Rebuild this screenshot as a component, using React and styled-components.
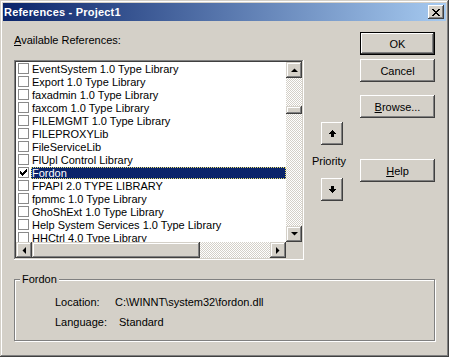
import React from 'react'
import styled, { createGlobalStyle } from 'styled-components'

const refs = [
  { name: 'EventSystem 1.0 Type Library' },
  { name: 'Export 1.0 Type Library' },
  { name: 'faxadmin 1.0 Type Library' },
  { name: 'faxcom 1.0 Type Library' },
  { name: 'FILEMGMT 1.0 Type Library' },
  { name: 'FILEPROXYLib' },
  { name: 'FileServiceLib' },
  { name: 'FlUpl Control Library' },
  { name: 'Fordon', checked: true, selected: true },
  { name: 'FPAPI 2.0 TYPE LIBRARY' },
  { name: 'fpmmc 1.0 Type Library' },
  { name: 'GhoShExt 1.0 Type Library' },
  { name: 'Help System Services 1.0 Type Library' },
  { name: 'HHCtrl 4.0 Type Library' },
]

const Global = createGlobalStyle`
  body {
    margin: 0;
    background: #d4d0c8;
    font-family: 'Liberation Sans', Arial, sans-serif;
    font-size: 11px;
  }
`

// little black triangles for scroll buttons
const Tri = ({ dir }) => {
  const pts = {
    up: '0,4 7,4 3.5,0.5',
    down: '0,0 7,0 3.5,3.5',
    left: '4,0 4,7 0.5,3.5',
    right: '0,0 0,7 3.5,3.5',
  }[dir]
  const vertical = dir === 'up' || dir === 'down'
  return (
    <svg width={vertical ? 7 : 4} height={vertical ? 4 : 7} viewBox={vertical ? '0 0 7 4' : '0 0 4 7'}>
      <polygon points={pts} fill="#000" />
    </svg>
  )
}

const Arrow = ({ down }) => (
  <svg width="7" height="7" viewBox="0 0 7 7" shapeRendering="crispEdges"
    style={down ? { transform: 'rotate(180deg)' } : undefined}>
    <rect x="3" y="0" width="1" height="1" fill="#000" />
    <rect x="2" y="1" width="3" height="1" fill="#000" />
    <rect x="1" y="2" width="5" height="1" fill="#000" />
    <rect x="0" y="3" width="7" height="1" fill="#000" />
    <rect x="2" y="4" width="3" height="3" fill="#000" />
  </svg>
)

export default function App() {
  return (
    <>
      <Global />
      <Window>
        <TitleBar>
          <Title>References - Project1</Title>
          <CloseBtn>
            <svg width="8" height="7" viewBox="0 0 8 7" shapeRendering="crispEdges">
              <path d="M0 0h2v1h-2zM6 0h2v1h-2zM1 1h2v1h-2zM5 1h2v1h-2zM2 2h4v1h-4zM3 3h2v1h-2zM2 4h4v1h-4zM1 5h2v1h-2zM5 5h2v1h-2zM0 6h2v1h-2zM6 6h2v1h-2z" fill="#000" />
            </svg>
          </CloseBtn>
        </TitleBar>
        <Body>
          <TopRow>
            <LeftCol>
              <Caption><u>A</u>vailable References:</Caption>
              <ListBox>
                <ListArea>
                  <Rows>
                    {refs.map((r) => (
                      <Row key={r.name}>
                        <Check>
                          {r.checked && (
                            <svg width="7" height="7" viewBox="0 0 7 7" shapeRendering="crispEdges">
                              <path d="M0 2h1v3h-1zM1 3h1v3h-1zM2 4h1v3h-1zM3 3h1v3h-1zM4 2h1v3h-1zM5 1h1v3h-1zM6 0h1v3h-1z" fill="#000" />
                            </svg>
                          )}
                        </Check>
                        <ItemText $selected={r.selected}>{r.name}</ItemText>
                      </Row>
                    ))}
                  </Rows>
                  <VScroll>
                    <ScrollBtn><Tri dir="up" /></ScrollBtn>
                    <Track $vertical>
                      <VThumb />
                    </Track>
                    <ScrollBtn><Tri dir="down" /></ScrollBtn>
                  </VScroll>
                </ListArea>
                <HScroll>
                  <ScrollBtn><Tri dir="left" /></ScrollBtn>
                  <HThumb />
                  <Track />
                  <ScrollBtn><Tri dir="right" /></ScrollBtn>
                  <Corner />
                </HScroll>
              </ListBox>
            </LeftCol>
            <PriorityCol>
              <ArrowBtn><Arrow /></ArrowBtn>
              <PriorityLabel>Priority</PriorityLabel>
              <ArrowBtn><Arrow down /></ArrowBtn>
            </PriorityCol>
            <ButtonCol>
              <Button $default>OK</Button>
              <Button $top={4}>Cancel</Button>
              <Button $top={13}><u>B</u>rowse...</Button>
              <Button $top={41}><u>H</u>elp</Button>
            </ButtonCol>
          </TopRow>
          <Group>
            <Legend>Fordon</Legend>
            <InfoRow>
              <InfoLabel>Location:</InfoLabel>
              <InfoValue>C:\WINNT\system32\fordon.dll</InfoValue>
            </InfoRow>
            <InfoRow>
              <InfoLabel>Language:</InfoLabel>
              <InfoValue $indent={4}>Standard</InfoValue>
            </InfoRow>
          </Group>
        </Body>
      </Window>
    </>
  )
}

const raised = `
  box-shadow: inset -1px -1px #404040, inset 1px 1px #d4d0c8,
    inset -2px -2px #808080, inset 2px 2px #fff;
`

const Window = styled.div`
width: 449px;
height: 357px;
box-sizing: border-box;
padding: 3px;
background: #d4d0c8;
box-shadow: inset -1px -1px #404040, inset 1px 1px #d4d0c8,
  inset -2px -2px #808080, inset 2px 2px #fff;
color: #000;
`

const TitleBar = styled.div`
height: 18px;
display: flex;
align-items: center;
justify-content: space-between;
padding: 0 2px 0 1px;
background: linear-gradient(to right, #0a246a, #a6caf0);
`

const Title = styled.div`
color: #fff;
font-weight: bold;
font-size: 11px;
letter-spacing: 0.2px;
line-height: 18px;
`

const CloseBtn = styled.div`
width: 16px;
height: 14px;
display: flex;
align-items: center;
justify-content: center;
background: #d4d0c8;
box-shadow: inset -1px -1px #404040, inset 1px 1px #fff,
  inset -2px -2px #808080, inset 2px 2px #d4d0c8;
`

const Body = styled.div`
padding: 11px 11px 0 11px;
`

const TopRow = styled.div`
display: flex;
align-items: flex-start;
`

const LeftCol = styled.div`
padding-top: 2px;
width: 290px;
`

const Caption = styled.div`
line-height: 13px;
height: 13px;
margin-bottom: 13px;
`

const ListBox = styled.div`
width: 290px;
height: 200px;
box-sizing: border-box;
padding: 2px;
background: #fff;
box-shadow: inset -1px -1px #fff, inset 1px 1px #808080,
  inset -2px -2px #d4d0c8, inset 2px 2px #404040;
display: flex;
flex-direction: column;
`

const ListArea = styled.div`
display: flex;
height: 180px;
`

const Rows = styled.div`
width: 270px;
height: 180px;
overflow: hidden;
background: #fff;
`

const Row = styled.div`
height: 13px;
display: flex;
align-items: center;
padding-left: 2px;
white-space: nowrap;
`

const Check = styled.div`
flex: none;
width: 11px;
height: 11px;
box-sizing: border-box;
border: 1px solid #8a8a8a;
background: #fff;
display: flex;
align-items: center;
justify-content: center;
margin-right: 2px;
`

const ItemText = styled.div`
flex: 1;
height: 12px;
line-height: 12px;
padding-left: 1px;
box-sizing: border-box;
background: ${(p) => (p.$selected ? '#0a246a' : 'transparent')};
color: ${(p) => (p.$selected ? '#fff' : '#000')};
outline: ${(p) => (p.$selected ? '1px dotted #e8e070' : 'none')};
outline-offset: -1px;
`

const VScroll = styled.div`
width: 16px;
display: flex;
flex-direction: column;
`

const ScrollBtn = styled.div`
flex: none;
width: 16px;
height: 16px;
display: flex;
align-items: center;
justify-content: center;
background: #d4d0c8;
${raised}
`

const Track = styled.div`
flex: 1;
background: repeating-conic-gradient(#fff 0 25%, #d4d0c8 0 50%) 0 0 / 2px 2px;
${(p) => p.$vertical && 'padding-top: 28px;'}
`

const VThumb = styled.div`
height: 8px;
background: #d4d0c8;
${raised}
`

const HScroll = styled.div`
display: flex;
height: 16px;
`

const HThumb = styled.div`
width: 168px;
background: #d4d0c8;
${raised}
`

const Corner = styled.div`
width: 16px;
background: #d4d0c8;
`

const PriorityCol = styled.div`
flex: 1;
display: flex;
flex-direction: column;
align-items: center;
padding-top: 90px;
`

const ArrowBtn = styled.div`
width: 22px;
height: 23px;
display: flex;
align-items: center;
justify-content: center;
background: #d4d0c8;
box-shadow: inset -1px -1px #404040, inset 1px 1px #fff,
  inset -2px -2px #808080, inset 2px 2px #d4d0c8;
`

const PriorityLabel = styled.div`
line-height: 13px;
margin: 10px 0 10px -6px;
`

const ButtonCol = styled.div`
width: 75px;
display: flex;
flex-direction: column;
`

const Button = styled.div`
width: 75px;
height: 23px;
margin-top: ${(p) => p.$top || 0}px;
box-sizing: border-box;
display: flex;
align-items: center;
justify-content: center;
background: #d4d0c8;
box-shadow: ${(p) =>
    p.$default
      ? 'inset 0 0 0 1px #000, inset -2px -2px #404040, inset 2px 2px #fff, inset -3px -3px #808080'
      : 'inset -1px -1px #404040, inset 1px 1px #fff, inset -2px -2px #808080, inset 2px 2px #d4d0c8'};
`

const Group = styled.div`
position: relative;
margin-top: 19px;
width: 421px;
height: 62px;
box-sizing: border-box;
border: 1px solid #808080;
box-shadow: inset 1px 1px #fff, 1px 1px #fff;
padding: 16px 0 0 40px;
`

const Legend = styled.div`
position: absolute;
top: -7px;
left: 5px;
padding: 0 2px;
line-height: 13px;
background: #d4d0c8;
`

const InfoRow = styled.div`
display: flex;
height: 13px;
line-height: 13px;
margin-bottom: 7px;
`

const InfoLabel = styled.div`
width: 60px;
`

const InfoValue = styled.div`
padding-left: ${(p) => p.$indent || 0}px;
`
